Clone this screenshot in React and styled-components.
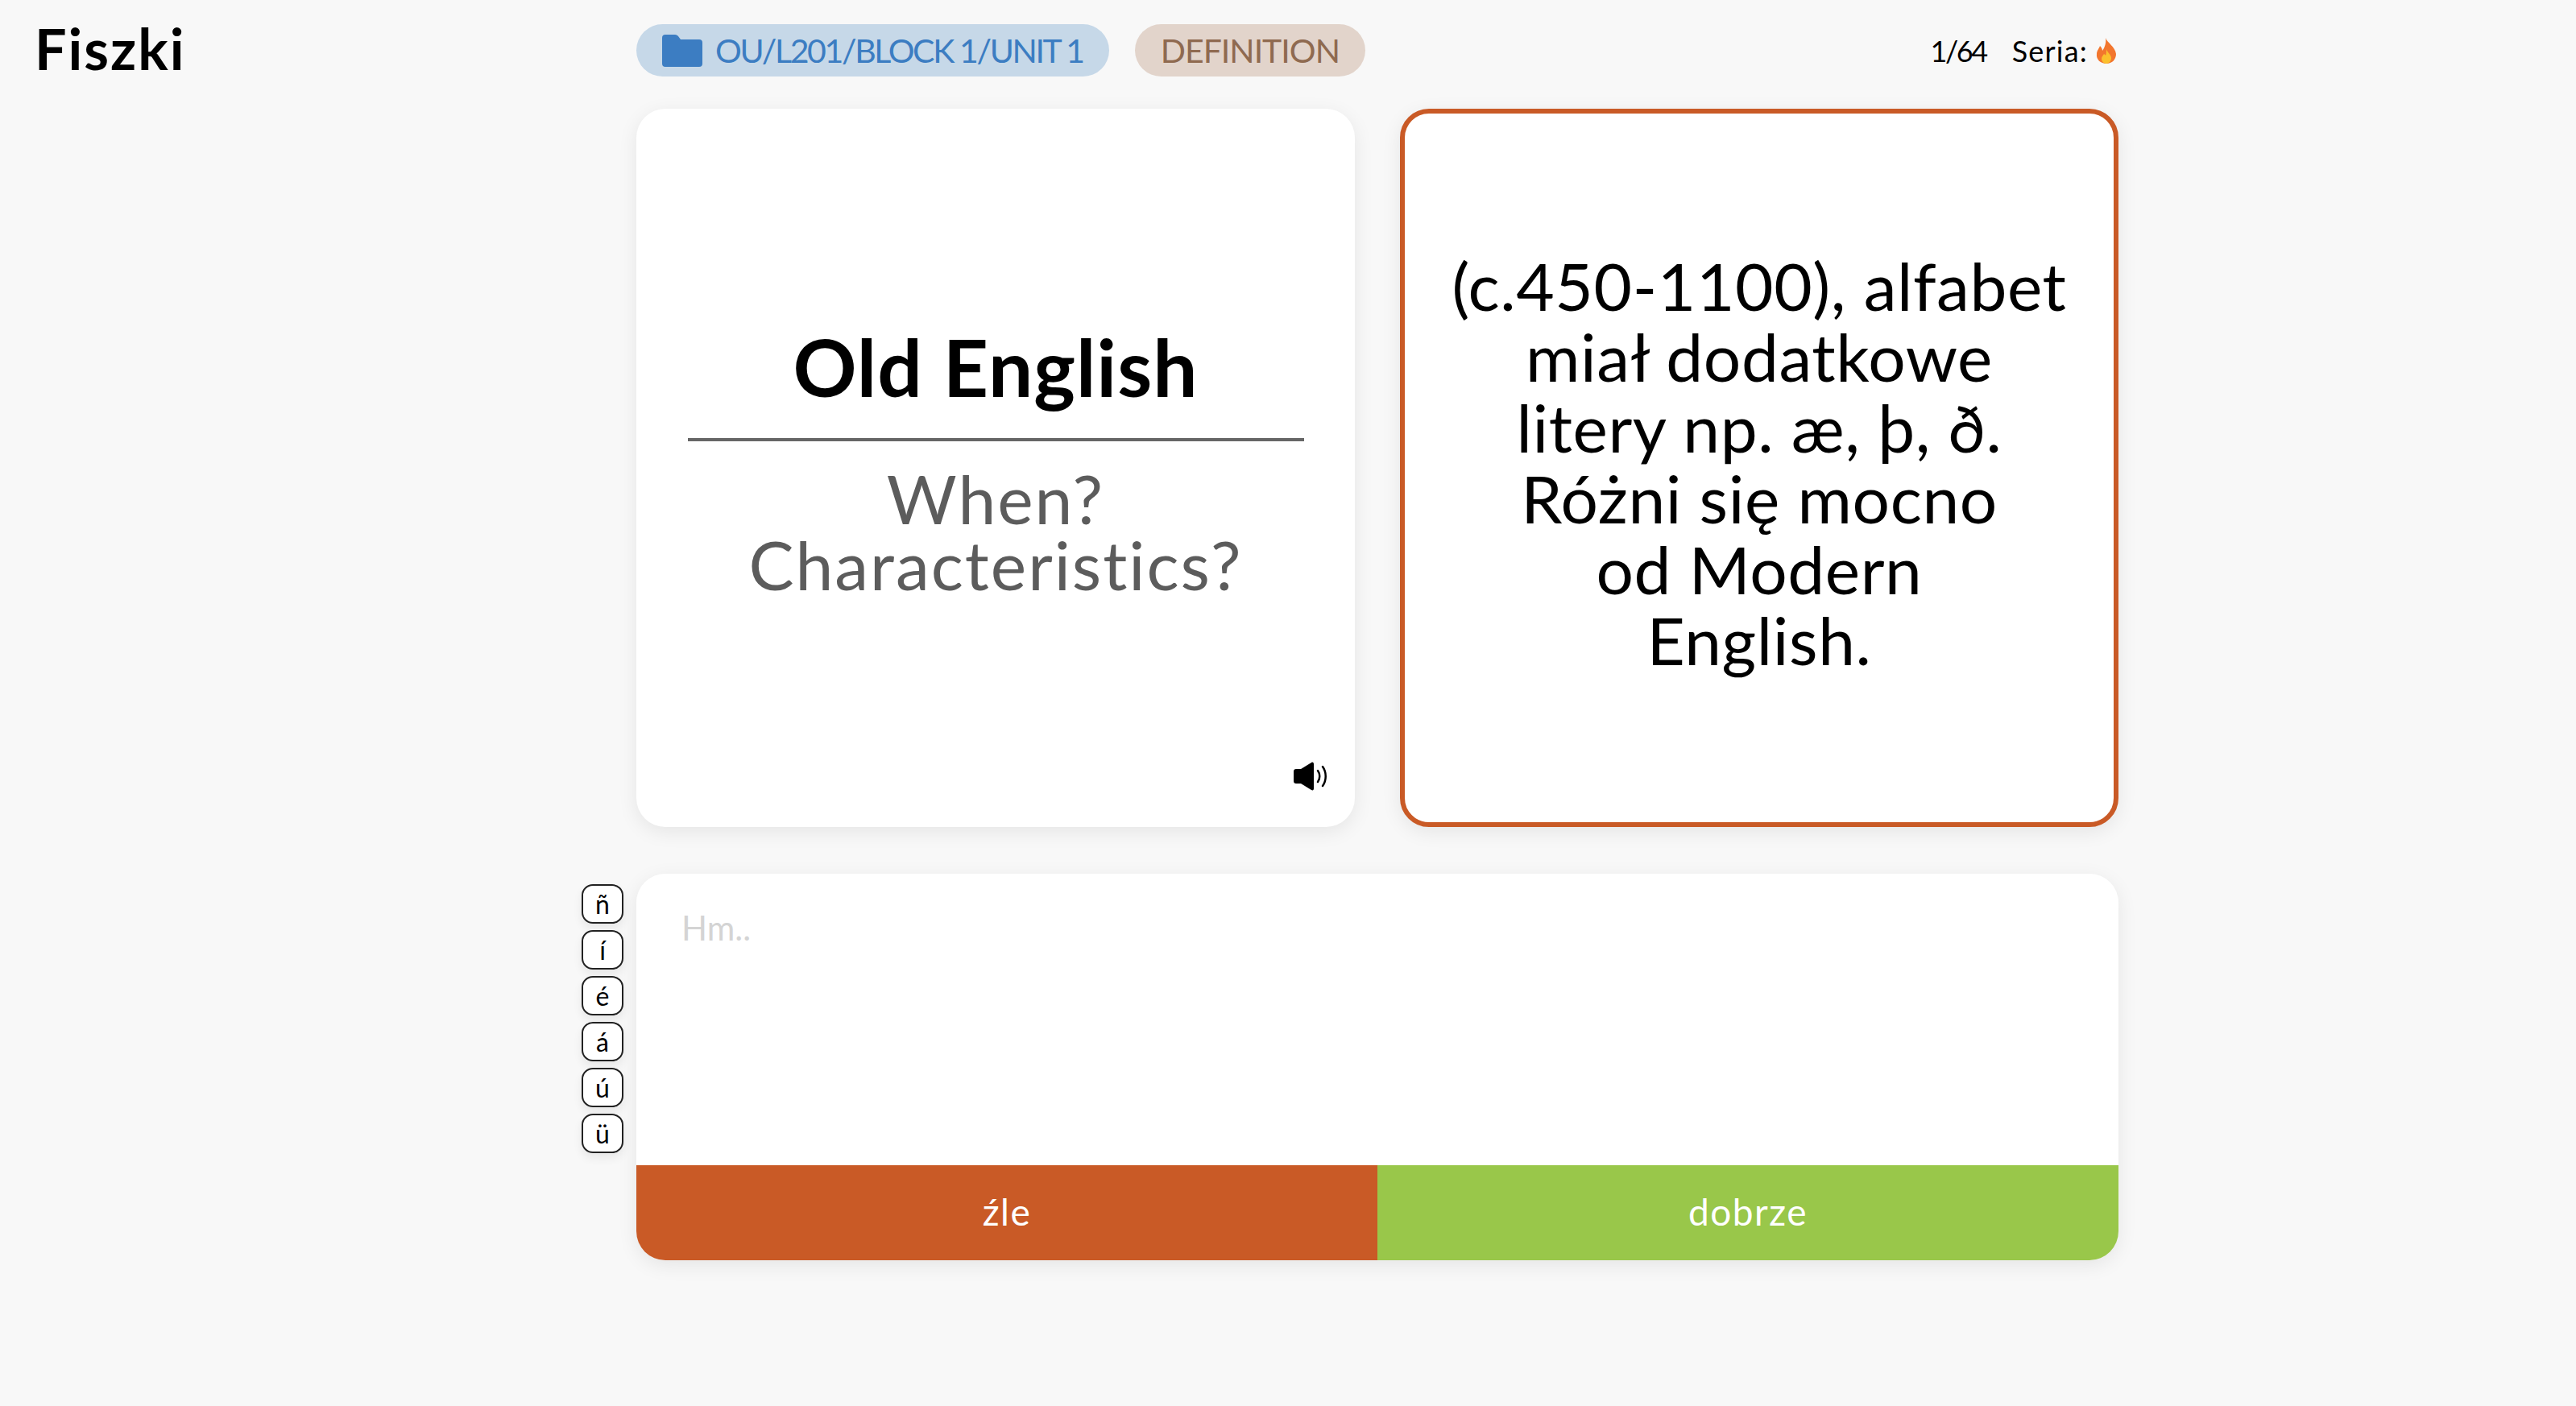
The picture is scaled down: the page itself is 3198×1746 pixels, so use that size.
import React from 'react';
import styled, { createGlobalStyle } from 'styled-components';

const GlobalStyle = createGlobalStyle`
  html, body {
    margin: 0;
    background: #f8f8f8;
    font-family: 'Lato', 'Liberation Sans', sans-serif;
    font-variant-ligatures: none;
    color: #000;
  }
`;

const Page = styled.div`
  display: grid;
  grid-template-columns: 722px 52px 16px 1840px;
  grid-template-rows: 135px 892px;
  height: 1746px;
  box-sizing: border-box;
`;

const Logo = styled.h1`
  grid-column: 1;
  margin: 22px 0 0 43px;
  font-size: 70px;
  line-height: 76px;
  font-weight: 700;
  letter-spacing: 2px;
`;

const Header = styled.header`
  grid-column: 4;
  display: flex;
  align-items: flex-start;
  gap: 32px;
  padding-top: 30px;
`;

const Pill = styled.div`
  display: flex;
  align-items: center;
  gap: 16px;
  height: 65px;
  box-sizing: border-box;
  padding: 0 32px;
  border-radius: 33px;
  font-size: 41px;
  letter-spacing: ${p => p.$spacing}px;
  background: ${p => p.$bg};
  color: ${p => p.$color};
`;

const Stats = styled.div`
  margin-left: auto;
  display: flex;
  align-items: center;
  gap: 32px;
  height: 65px;
  font-size: 36px;
`;

const Count = styled.span`
  letter-spacing: -2.4px;
`;

const Streak = styled.span`
  display: flex;
  align-items: center;
  gap: 8px;
  letter-spacing: 1.2px;
`;

const Cards = styled.main`
  grid-column: 4;
  grid-row: 2;
  display: grid;
  grid-template-columns: 892px 892px;
  column-gap: 56px;
  height: 892px;
`;

const Card = styled.section`
  position: relative;
  box-sizing: border-box;
  display: flex;
  flex-direction: column;
  align-items: center;
  justify-content: center;
  text-align: center;
  background: #fff;
  border-radius: 36px;
  box-shadow: 0 6px 24px rgba(0, 0, 0, 0.08);
  border: ${p => (p.$active ? '6px solid #c95a26' : 'none')};
`;

const Question = styled.div`
  width: 765px;
  margin-top: -20px;
`;

const Term = styled.h2`
  margin: 0;
  padding-bottom: 34px;
  border-bottom: 4px solid #666;
  font-size: 98px;
  line-height: 110px;
  font-weight: 700;
  letter-spacing: 1px;
`;

const Hint = styled.p`
  margin: 30px 0 0;
  font-size: 84px;
  line-height: 82px;
  letter-spacing: 2px;
  color: #5c5c5c;
`;

const Definition = styled.p`
  margin: -14px 0 0;
  font-size: 82px;
  line-height: 88px;
  letter-spacing: 0.6px;
`;

const Speaker = styled.button`
  position: absolute;
  right: 34px;
  bottom: 45px;
  display: flex;
  padding: 0;
  border: 0;
  background: none;
`;

const Answer = styled.div`
  grid-column: 1 / -1;
  display: grid;
  grid-template-columns: 722px 52px 16px 1840px;
  padding-top: 58px;
  align-items: start;
`;

const Keys = styled.div`
  grid-column: 2;
  display: flex;
  flex-direction: column;
  gap: 8px;
  padding-top: 13px;
`;

const Key = styled.button`
  width: 52px;
  height: 49px;
  padding: 0;
  box-sizing: border-box;
  border: 2px solid #222;
  border-radius: 14px;
  background: #fff;
  font-family: inherit;
  font-size: 32px;
  box-shadow: 0 6px 12px rgba(0, 0, 0, 0.07);
`;

const Panel = styled.div`
  grid-column: 4;
  border-radius: 36px;
  overflow: hidden;
  box-shadow: 0 6px 24px rgba(0, 0, 0, 0.08);
`;

const Notes = styled.textarea`
  display: block;
  width: 100%;
  height: 362px;
  box-sizing: border-box;
  padding: 42px 56px;
  border: 0;
  outline: 0;
  resize: none;
  background: #fff;
  font-family: inherit;
  font-size: 42px;
  &::placeholder {
    color: #d4d4d4;
  }
`;

const Grades = styled.div`
  display: grid;
  grid-template-columns: 1fr 1fr;
`;

const Grade = styled.button`
  height: 118px;
  padding: 0 0 4px;
  border: 0;
  background: ${p => p.$bg};
  color: #fff;
  font-family: inherit;
  font-size: 46px;
  letter-spacing: 1.5px;
`;

const FolderIcon = () => (
  <svg width="50" height="40" viewBox="0 0 50 40">
    <path fill="#3c7dc2" d="M0 4a4 4 0 0 1 4-4h12c2 0 3 1 4 2l3 4h23a4 4 0 0 1 4 4v26a4 4 0 0 1-4 4H4a4 4 0 0 1-4-4z" />
  </svg>
);

const FlameIcon = () => (
  <svg width="30" height="32" viewBox="0 0 30 32">
    <path fill="#f2762e" d="M14 0c2 6 12 11 13 20 0 7-5 12-12 12S2 27 3 20c0-4 3-7 4-10 2 2 3 4 3 6 3-4 5-10 4-16z" />
    <path fill="#fbc02d" d="M15 14c1 4 6 7 6 11 0 4-3 7-6 7s-6-3-6-6c0-3 2-4 3-6 1 1 2 1 2 2 1-2 1-5 1-8z" />
  </svg>
);

const SpeakerIcon = () => (
  <svg width="42" height="36" viewBox="0 0 42 36">
    <path d="M0 12a3 3 0 0 1 3-3h6L22 1c2-1 3 0 3 2v30c0 2-1 3-3 2L9 27H3a3 3 0 0 1-3-3z" />
    <path fill="none" stroke="#000" strokeWidth="2.5" strokeLinecap="round" d="M30 11c3 4 3 10 0 14M36 6c5 7 5 17 0 24" />
  </svg>
);

const accents = ['ñ', 'í', 'é', 'á', 'ú', 'ü'];

export default function App() {
  return (
    <>
      <GlobalStyle />
      <Page>
        <Logo>Fiszki</Logo>
        <Header>
          <Pill $bg="#c6d8e8" $color="#3c7dc2" $spacing={-2.35}>
            <FolderIcon />
            OU/L201/BLOCK 1/UNIT 1
          </Pill>
          <Pill $bg="#e2d4cb" $color="#8f6a50" $spacing={-1}>DEFINITION</Pill>
          <Stats>
            <Count>1/64</Count>
            <Streak>Seria: <FlameIcon /></Streak>
          </Stats>
        </Header>
        <Cards>
          <Card>
            <Question>
              <Term>Old English</Term>
              <Hint>When?<br />Characteristics?</Hint>
            </Question>
            <Speaker aria-label="Odtwórz"><SpeakerIcon /></Speaker>
          </Card>
          <Card $active>
            <Definition>
              (c.450-1100), alfabet<br />
              miał dodatkowe<br />
              litery np. æ, þ, ð.<br />
              Różni się mocno<br />
              od Modern<br />
              English.
            </Definition>
          </Card>
        </Cards>
        <Answer>
          <Keys>
            {accents.map(letter => <Key key={letter}>{letter}</Key>)}
          </Keys>
          <Panel>
            <Notes placeholder="Hm.." />
            <Grades>
              <Grade $bg="#c95a26">źle</Grade>
              <Grade $bg="#99c74a">dobrze</Grade>
            </Grades>
          </Panel>
        </Answer>
      </Page>
    </>
  );
}
